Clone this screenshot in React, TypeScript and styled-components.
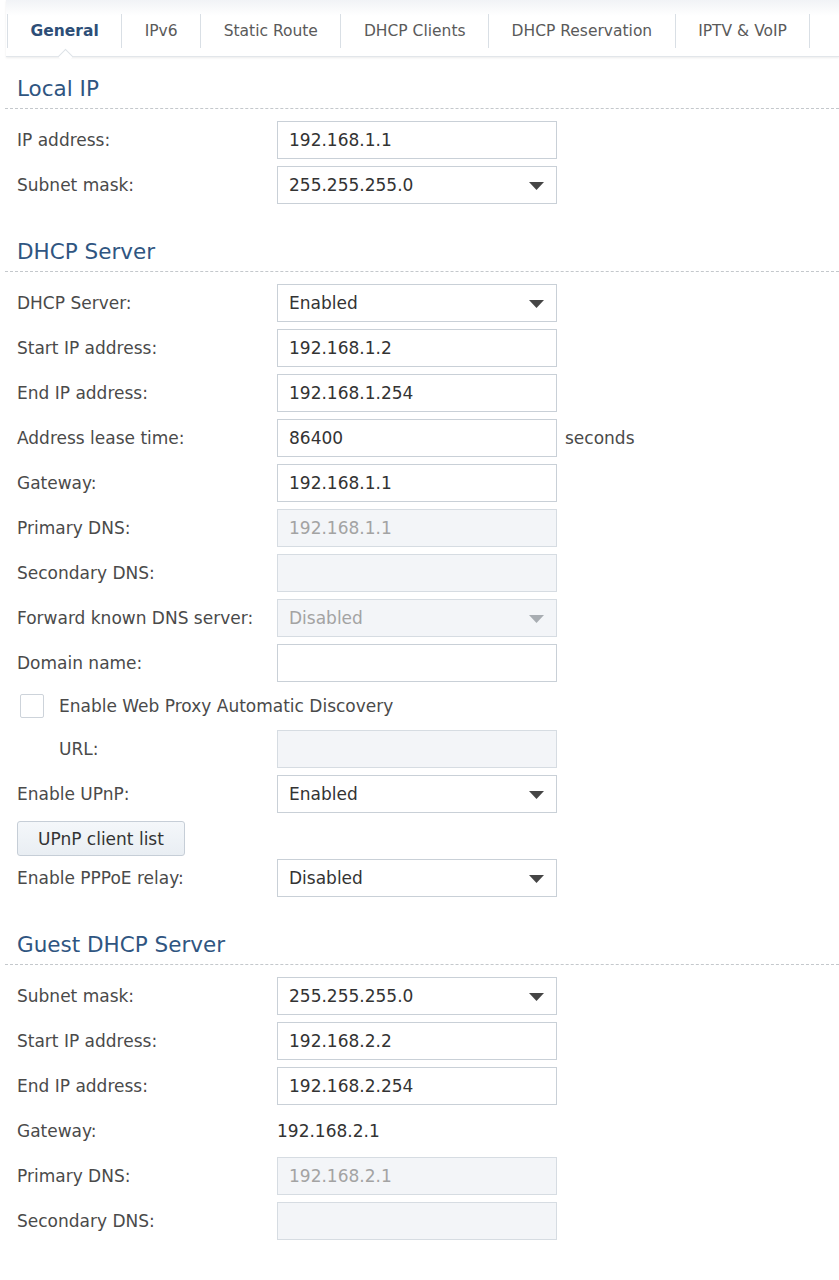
import React from 'react';
import styled, { createGlobalStyle } from 'styled-components';

const GlobalStyle = createGlobalStyle`
  html, body {
    margin: 0;
    padding: 0;
    background: #ffffff;
  }
  body {
    font-family: "DejaVu Sans", Verdana, sans-serif;
    font-size: 17px;
    color: #444;
  }
`;

const Page = styled.div`
  width: 839px;
  min-height: 1280px;
  background: #ffffff;
`;

const TabBar = styled.div`
  margin-left: 6px;
  padding: 14px 0 8px;
  background: linear-gradient(#f1f3f6 0, #ffffff 16px);
  border-bottom: 1px solid #e2e6ea;
  box-shadow: 0 1px 2px rgba(0, 0, 0, 0.08);
  display: flex;
`;

const TabList = styled.div`
  display: flex;
  padding-left: 1px;
  border-right: 1px solid #d9dfe5;
`;

const Tab = styled.div<{ $active?: boolean }>`
  position: relative;
  height: 34px;
  line-height: 34px;
  padding: 0 22.5px;
  border-left: 1px solid #d9dfe5;
  font-size: 15.5px;
  white-space: nowrap;
  color: ${(p) => (p.$active ? '#2d4e77' : '#5a5a5a')};
  font-weight: ${(p) => (p.$active ? 700 : 400)};
`;

const Notch = styled.span`
  position: absolute;
  left: calc(50% - 5px);
  bottom: -14px;
  width: 10px;
  height: 10px;
  background: #ffffff;
  border-top: 1px solid #dde2e7;
  border-left: 1px solid #dde2e7;
  transform: rotate(45deg);
  z-index: 1;
`;

const Section = styled.section<{ $top: number }>`
  margin-top: ${(p) => p.$top}px;
`;

const Heading = styled.h2`
  margin: 0 0 0 5px;
  padding: 0 0 4px 12px;
  font-size: 21.5px;
  line-height: 30px;
  font-weight: 400;
  color: #2f5581;
  border-bottom: 1px dashed #c4c8cc;
`;

const Fields = styled.div`
  margin-top: 12px;
  display: flex;
  flex-direction: column;
  gap: 7px;
`;

const Row = styled.div<{ $height?: number }>`
  display: flex;
  align-items: center;
  height: ${(p) => p.$height ?? 38}px;
  padding-left: 17px;
`;

const Label = styled.div<{ $indent?: number }>`
  width: ${(p) => 260 - (p.$indent ?? 0)}px;
  padding-left: ${(p) => p.$indent ?? 0}px;
  flex-shrink: 0;
  color: #4a4a4a;
  white-space: nowrap;
`;

const Box = styled.div<{ $disabled?: boolean }>`
  position: relative;
  box-sizing: border-box;
  width: 280px;
  height: 38px;
  display: flex;
  align-items: center;
  padding: 0 11px;
  border: 1px solid ${(p) => (p.$disabled ? '#d6dce2' : '#c9d0d7')};
  background: ${(p) => (p.$disabled ? '#f3f5f8' : '#ffffff')};
  color: ${(p) => (p.$disabled ? '#a3a3a3' : '#333333')};
`;

const Arrow = styled.svg`
  position: absolute;
  right: 12px;
  top: 15px;
`;

const Unit = styled.span`
  margin-left: 8px;
  color: #4a4a4a;
`;

const PlainValue = styled.span`
  color: #333333;
`;

const CheckBox = styled.span`
  box-sizing: border-box;
  width: 24px;
  height: 24px;
  margin-left: 3px;
  margin-right: 15px;
  border: 1px solid #cdd3da;
  border-radius: 2px;
  background: #ffffff;
`;

const CheckLabel = styled.span`
  color: #4a4a4a;
`;

const ButtonRow = styled.div`
  padding-left: 17px;
  margin: 1px 0 -4px;
`;

const Button = styled.button`
  box-sizing: border-box;
  height: 35px;
  padding: 0 20px;
  font-family: "DejaVu Sans", Verdana, sans-serif;
  font-size: 17px;
  color: #333;
  background: linear-gradient(#f4f7fa, #e9eef3);
  border: 1px solid #c6ced7;
  border-radius: 3px;
`;

type FieldProps = {
  label: string;
  value?: string;
  select?: boolean;
  disabled?: boolean;
  indent?: number;
  unit?: string;
};

const Field = ({ label, value = '', select, disabled, indent, unit }: FieldProps) => (
  <Row>
    <Label $indent={indent}>{label}</Label>
    <Box $disabled={disabled}>
      {value}
      {select && (
        <Arrow width="15" height="8" viewBox="0 0 15 8">
          <path d="M0 0 H15 L7.5 8 Z" fill={disabled ? '#a8adb2' : '#454545'} />
        </Arrow>
      )}
    </Box>
    {unit && <Unit>{unit}</Unit>}
  </Row>
);

const tabs = ['General', 'IPv6', 'Static Route', 'DHCP Clients', 'DHCP Reservation', 'IPTV & VoIP'];

export default function App() {
  return (
    <Page>
      <GlobalStyle />
      <TabBar>
        <TabList>
          {tabs.map((t, i) => (
            <Tab key={t} $active={i === 0}>
              {t}
              {i === 0 && <Notch />}
            </Tab>
          ))}
        </TabList>
      </TabBar>

      <Section $top={17}>
        <Heading>Local IP</Heading>
        <Fields>
          <Field label="IP address:" value="192.168.1.1" />
          <Field label="Subnet mask:" value="255.255.255.0" select />
        </Fields>
      </Section>

      <Section $top={33}>
        <Heading>DHCP Server</Heading>
        <Fields>
          <Field label="DHCP Server:" value="Enabled" select />
          <Field label="Start IP address:" value="192.168.1.2" />
          <Field label="End IP address:" value="192.168.1.254" />
          <Field label="Address lease time:" value="86400" unit="seconds" />
          <Field label="Gateway:" value="192.168.1.1" />
          <Field label="Primary DNS:" value="192.168.1.1" disabled />
          <Field label="Secondary DNS:" disabled />
          <Field label="Forward known DNS server:" value="Disabled" select disabled />
          <Field label="Domain name:" />
          <Row $height={34}>
            <CheckBox />
            <CheckLabel>Enable Web Proxy Automatic Discovery</CheckLabel>
          </Row>
          <Field label="URL:" indent={42} disabled />
          <Field label="Enable UPnP:" value="Enabled" select />
          <ButtonRow>
            <Button type="button">UPnP client list</Button>
          </ButtonRow>
          <Field label="Enable PPPoE relay:" value="Disabled" select />
        </Fields>
      </Section>

      <Section $top={33}>
        <Heading>Guest DHCP Server</Heading>
        <Fields>
          <Field label="Subnet mask:" value="255.255.255.0" select />
          <Field label="Start IP address:" value="192.168.2.2" />
          <Field label="End IP address:" value="192.168.2.254" />
          <Row>
            <Label>Gateway:</Label>
            <PlainValue>192.168.2.1</PlainValue>
          </Row>
          <Field label="Primary DNS:" value="192.168.2.1" disabled />
          <Field label="Secondary DNS:" disabled />
        </Fields>
      </Section>
    </Page>
  );
}
